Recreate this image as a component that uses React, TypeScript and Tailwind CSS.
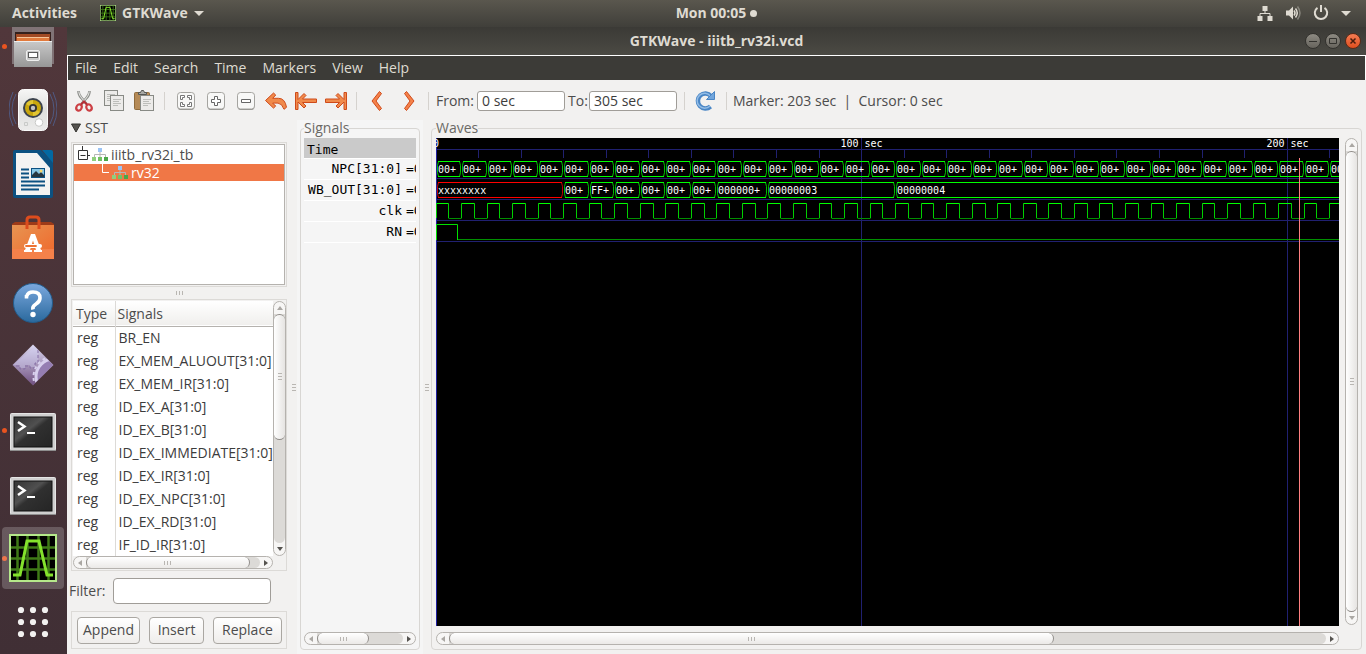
import React, { useEffect, useRef, useState } from "react";

const PX_PER_SEC = 4.256;
const END = 305;
const at = (t: number) => Math.floor(t * PX_PER_SEC) + 0.5;

type Seg = { from: number; to: number; label: string; undef?: boolean };

const npc: Seg[] = Array.from({ length: 51 }, (_, i) => ({ from: i * 6, to: Math.min((i + 1) * 6, END), label: "00+" }));
const wbOut: Seg[] = [
  { from: 0, to: 30, label: "xxxxxxxx", undef: true },
  { from: 30, to: 36, label: "00+" },
  { from: 36, to: 42, label: "FF+" },
  { from: 42, to: 48, label: "00+" },
  { from: 48, to: 54, label: "00+" },
  { from: 54, to: 60, label: "00+" },
  { from: 60, to: 66, label: "00+" },
  { from: 66, to: 78, label: "000000+" },
  { from: 78, to: 108, label: "00000003" },
  { from: 108, to: END, label: "00000004" },
];

function Bus({ segs, top, until }: { segs: Seg[]; top: number; until: number }) {
  const t = top + 0.5;
  const b = top + 15.5;
  return (
    <g>
      {segs.filter((s) => s.from < until).map((s) => {
        const x1 = at(s.from);
        const x2 = at(s.to);
        const c = s.undef ? "#ff0000" : "#00ff00";
        return (
          <g key={s.from} fill="none" stroke={c}>
            <path d={`M${x1 + 1.5} ${t}H${x2 - 1.5}M${x1 + 1.5} ${b}H${x2 - 1.5}`} />
            <path
              d={`M${x1 + 2} ${t}L${x1 + 1} ${t + 4}V${b - 4}L${x1 + 2} ${b}M${x2 - 2} ${t}L${x2 - 1} ${t + 4}V${b - 4}L${x2 - 2} ${b}`}
              opacity=".75"
            />
            <text x={x1 + 1.5} y={top + 12} fill="#fff" stroke="none">
              {s.label}
            </text>
          </g>
        );
      })}
    </g>
  );
}

function WaveCanvas() {
  const ref = useRef<SVGSVGElement>(null);
  const [width, setWidth] = useState(903);
  useEffect(() => {
    const el = ref.current;
    if (!el) return;
    const observer = new ResizeObserver(([entry]) => setWidth(entry.contentRect.width));
    observer.observe(el);
    return () => observer.disconnect();
  }, []);
  const until = Math.min(END, width / PX_PER_SEC);
  const ticks = Array.from({ length: 31 }, (_, i) => i * 10);
  const cycles = Array.from({ length: 51 }, (_, i) => i * 6);
  const majors = [100, 200, 300].filter((t) => t < until);
  return (
    <svg ref={ref} className="block h-full w-full" fontFamily="'DejaVu Sans Mono', monospace" fontSize="10" role="img" aria-label="Waves">
      <rect width="100%" height="100%" fill="#000" />
      <g stroke="#202070">
        {[11.5, 40.5, 61.5, 82.5, 103.5].map((y) => (
          <line key={y} x1="0" x2="100%" y1={y} y2={y} />
        ))}
        {ticks.map((t) => (
          <line key={t} x1={at(t)} x2={at(t)} y1="11" y2="20" />
        ))}
        {majors.map((t) => (
          <line key={t} x1={at(t)} x2={at(t)} y1="0" y2="100%" />
        ))}
      </g>
      <line x1=".5" x2=".5" y1="0" y2="100%" stroke="#2020a0" />
      <g fill="#fff">
        <text x="-3" y="9">0</text>
        {majors.map((t) => (
          <text key={t} x={at(t)} y="9" textAnchor="middle">
            {t} sec
          </text>
        ))}
      </g>
      <Bus segs={npc} top={23} until={until} />
      <Bus segs={wbOut} top={44} until={until} />
      {cycles.map((t) => (
        <g key={t} fill="none">
          <path d={`M${at(t + 3)} 80.5H${at(t + 6)}`} stroke="#009000" />
          <path d={`M${at(t)} 80V65.5M${at(t + 3)} 65.5V80`} stroke="#00d000" />
          <path d={`M${at(t)} 65.5H${at(t + 3)}`} stroke="#00ff00" />
        </g>
      ))}
      <path d={`M${at(5)} 101.5H${at(END)}`} stroke="#009000" />
      <path d={`M.5 102V86.5H${at(5)}V102`} fill="none" stroke="#00e000" />
      <line x1={at(203)} x2={at(203)} y1="20" y2="100%" stroke="#ff8080" />
    </svg>
  );
}

function Grip({ vertical }: { vertical?: boolean }) {
  return (
    <span className={vertical ? "flex flex-col gap-[2px]" : "flex gap-[2px]"}>
      {[0, 1, 2].map((i) => (
        <span key={i} className={vertical ? "h-px w-1 bg-[#b9b6b2]" : "h-1 w-px bg-[#b9b6b2]"} />
      ))}
    </span>
  );
}

function Arrow({ dir, dim }: { dir: "left" | "right" | "up" | "down"; dim?: boolean }) {
  const d = { left: "M6 1v6L2 4z", right: "M2 1v6l4-3z", up: "M1 6h6L4 2z", down: "M1 2h6L4 6z" }[dir];
  return (
    <svg className="size-2" viewBox="0 0 8 8" aria-hidden="true">
      <path d={d} fill={dim ? "#aaa7a3" : "#55534f"} />
    </svg>
  );
}

function Scroll({ vertical, size, label, dimEnd }: { vertical?: boolean; size: number; label: string; dimEnd?: boolean }) {
  const btn = "flex size-3 shrink-0 items-center justify-center";
  return (
    <div
      role="group"
      aria-label={label}
      className={
        vertical
          ? "flex w-[13px] shrink-0 flex-col rounded-full border border-[#b5b2ae] bg-[#f7f6f5]"
          : "flex h-[13px] shrink-0 items-center rounded-full border border-[#b5b2ae] bg-[#f7f6f5]"
      }
    >
      <button type="button" aria-label="Scroll back" className={btn}>
        <Arrow dir={vertical ? "up" : "left"} dim />
      </button>
      <div className={vertical ? "min-h-0 w-full flex-1 rounded-b-full bg-[#dcdad7]" : "h-full min-w-0 flex-1 rounded-r-full bg-[#dcdad7]"}>
        <div
          className={
            vertical
              ? "flex w-full items-center justify-center rounded-full border-y border-[#8f8c88] bg-linear-to-r from-white to-[#e6e4e2]"
              : "flex h-full items-center justify-center rounded-full border-x border-[#8f8c88] bg-linear-to-b from-white to-[#ebe9e7]"
          }
          style={vertical ? { height: `${size}%` } : { width: `${size}%` }}
        >
          <Grip vertical={vertical} />
        </div>
      </div>
      <button type="button" aria-label="Scroll forward" className={btn}>
        <Arrow dir={vertical ? "down" : "right"} dim={dimEnd} />
      </button>
    </div>
  );
}

function GtkWaveIcon({ className }: { className: string }) {
  return (
    <svg className={className} viewBox="0 0 48 48" aria-hidden="true">
      <rect width="48" height="48" fill="#b5e88b" />
      <rect x="2" y="2" width="44" height="44" fill="#000" />
      <path d="M8.500 2v44M18.500 2v44M29.500 2v44M39.500 2v44M2 13.500h44M2 24.500h44M2 35.500h44" stroke="#3f7a17" strokeWidth="2.500" />
      <path d="M4 41h7L18 7h12l8 34h6" fill="none" stroke="#84e22c" strokeWidth="3" />
    </svg>
  );
}

function FilesIcon() {
  return (
    <svg className="size-12" viewBox="0 0 48 48" aria-hidden="true">
      <defs>
        <linearGradient id="cab" x2="0" y2="1"><stop stopColor="#c9c9c9" /><stop offset="1" stopColor="#979797" /></linearGradient>
      </defs>
      <path d="M3 0h42v42H3z" fill="#807376" />
      <rect x="6" y="10" width="36" height="12" fill="#35201c" />
      <path d="M7 12h34v9H7z" fill="#a24a24" /><path d="M8 16h32v4H8z" fill="#e27a3c" /><path d="M8 15.500h32" stroke="#f5c59b" />
      <path d="M5 19h38v26H5z" fill="url(#cab)" /><path d="M5 19.500h38" stroke="#ededed" />
      <rect x="17.500" y="28.500" width="13" height="10" rx="1.500" fill="#c9c9c9" stroke="#efefef" />
      <rect x="19.500" y="30.500" width="9" height="5" fill="#fff" stroke="#5c5c5c" />
    </svg>
  );
}

function SpeakerIcon() {
  return (
    <svg className="size-12" viewBox="0 0 48 48" aria-hidden="true">
      <defs>
        <linearGradient id="spk" x2="0" y2="1"><stop stopColor="#f6f6f5" /><stop offset=".5" stopColor="#dedfdd" /><stop offset="1" stopColor="#ececeb" /></linearGradient>
      </defs>
      <g fill="none" stroke="#505a82">
        <path d="M7 8q-8 15 0 30M4 6q-8 17 0 34M41 8q8 15 0 30M44 6q8 17 0 34" />
      </g>
      <rect x="9.500" y="3.500" width="29" height="41" rx="5" fill="url(#spk)" stroke="#fafafa" />
      <circle cx="24" cy="22" r="10" fill="#3c434d" />
      <circle cx="24" cy="22" r="8" fill="#c9a70d" />
      <path d="M17 18a8 8 0 0 1 7-4v16a8 8 0 0 0 7-4z" fill="#f2d94b" opacity=".6" />
      <circle cx="24" cy="22" r="4" fill="#333" /><circle cx="24" cy="22" r="2.200" fill="#c4c4c4" />
      <circle cx="30" cy="36.500" r="3.800" fill="#fff" stroke="#c9cac8" />
      <path d="M15.500 36.500h3v3h-3z" fill="none" stroke="#c8cac8" />
    </svg>
  );
}

function WriterIcon() {
  return (
    <svg className="size-12" viewBox="0 0 48 48" aria-hidden="true">
      <path d="M6 0h26l12 12v34q0 2-2 2H6q-2 0-2-2V2q0-2 2-2z" fill="#0c5181" />
      <path d="M33 0h9q2 0 2 2v11z" fill="#0369a3" />
      <path d="M7 3h21l13 15v27H7z" fill="#f3f3f2" />
      <path d="M12 19.500h8M12 23.500h8M12 27.500h8M12 31.500h24M12 35.500h24M12 39.500h18" stroke="#0c5181" strokeWidth="2" />
      <rect x="22.500" y="18.500" width="13" height="9" fill="#87c6e5" stroke="#0c5181" />
      <path d="M23 27v-2l4-4 3 3 2-2 3 3v2z" fill="#263640" /><circle cx="32" cy="21" r="1.500" fill="#f9d76a" />
    </svg>
  );
}

function SoftwareIcon() {
  return (
    <svg className="size-12" viewBox="0 0 48 48" aria-hidden="true">
      <defs>
        <linearGradient id="bag" x2="1" y2="1"><stop stopColor="#e79452" /><stop offset="1" stopColor="#f0672a" /></linearGradient>
      </defs>
      <path d="M3 10l3-2h36l3 2v6H3z" fill="#9d3a18" />
      <path d="M3 11h42v34H3z" fill="url(#bag)" /><path d="M3 35h42v10H3z" fill="#f4814a" />
      <path d="M18 15V6q0-3 3-3h6q3 0 3 3v9" fill="none" stroke="#dd4c1d" strokeWidth="3" />
      <path d="M22 20h4l6 16h1v2h-8v-2h2l-3-9.500L21 36h2v2h-8v-2h1z" fill="#fff" />
      <rect x="15" y="30" width="18" height="4" rx="2" fill="#fff" />
      <path d="M17 32h10" stroke="#ee7334" strokeWidth="1.800" strokeLinecap="round" />
    </svg>
  );
}

function HelpIcon() {
  return (
    <svg className="size-12" viewBox="0 0 48 48" aria-hidden="true">
      <defs>
        <linearGradient id="hlp" x2="0" y2="1"><stop stopColor="#7ba8de" /><stop offset="1" stopColor="#2a699d" /></linearGradient>
      </defs>
      <circle cx="24" cy="25" r="19.500" fill="url(#hlp)" stroke="#225c8c" />
      <path d="M17.500 17v3.500M17.800 18q1.200-4 6.200-4 7 0 7 6 0 3.500-4 6t-3 5.500" fill="none" stroke="#fff" strokeWidth="3.600" />
      <circle cx="24" cy="36.500" r="2.700" fill="#fff" />
    </svg>
  );
}

function DiamondIcon() {
  return (
    <svg className="size-12" viewBox="0 0 48 48" aria-hidden="true">
      <defs>
        <linearGradient id="dia" x2="0" y2="1"><stop stopColor="#dcd9f2" /><stop offset="1" stopColor="#705080" /></linearGradient>
        <clipPath id="diac"><path d="M24 3l20 20-20 20L4 23z" /></clipPath>
      </defs>
      <path d="M24 2.500L44.500 23 24 43.500 3.500 23z" fill="url(#dia)" />
      <g clipPath="url(#diac)">
        <path d="M29 3v18h-3v4h-5v-2h-5v3h-5v-3H3z" fill="#cfcdf0" opacity=".4" />
        <path d="M29 3v18h-3v5h-5v-2h-5v3h-5v-3H3" fill="none" stroke="#846ea5" strokeDasharray="3 2" />
        <circle cx="45" cy="35" r="19" fill="#957eb2" /><circle cx="45" cy="35" r="18" fill="none" stroke="#d8d0ed" strokeWidth="3" />
        <circle cx="45" cy="35" r="20.500" fill="none" stroke="#d8d0ed" strokeWidth="2" strokeDasharray="3 3" />
      </g>
    </svg>
  );
}

function TerminalIcon() {
  return (
    <svg className="size-12" viewBox="0 0 48 48" aria-hidden="true">
      <defs>
        <linearGradient id="trm" x2="1" y2="1"><stop offset=".1" stopColor="#3a3a3a" /><stop offset=".4" stopColor="#505050" /><stop offset=".5" stopColor="#303030" /><stop offset="1" stopColor="#252525" /></linearGradient>
      </defs>
      <rect x="1.500" y="7.500" width="45" height="37" rx="1" fill="#cfcfcf" stroke="#e5e5e5" />
      <path d="M1 44.500h46" stroke="#8e8e8e" />
      <rect x="5" y="11" width="38" height="30" fill="url(#trm)" stroke="#111" />
      <path d="M9 16l6.500 4.500L9 25" fill="none" stroke="#fff" strokeWidth="2.500" /><path d="M18 27h8" stroke="#fff" strokeWidth="2" />
    </svg>
  );
}

function AppsIcon() {
  return (
    <svg className="size-12" viewBox="0 0 48 48" aria-hidden="true" fill="#f2f1f0">
      {[12, 24, 36].map((y) => [12, 24, 36].map((x) => <circle key={`${x}-${y}`} cx={x} cy={y} r="3.100" />))}
    </svg>
  );
}

const dock = [
  { name: "Files", icon: <FilesIcon />, running: true },
  { name: "Rhythmbox", icon: <SpeakerIcon /> },
  { name: "LibreOffice Writer", icon: <WriterIcon /> },
  { name: "Ubuntu Software", icon: <SoftwareIcon /> },
  { name: "Help", icon: <HelpIcon /> },
  { name: "Settings", icon: <DiamondIcon /> },
  { name: "Terminal", icon: <TerminalIcon />, running: true },
  { name: "Terminal 2", icon: <TerminalIcon /> },
  { name: "GTKWave", icon: <GtkWaveIcon className="size-12" />, running: true, active: true },
  { name: "Show Applications", icon: <AppsIcon /> },
];

function Dock() {
  return (
    <nav aria-label="Dock" className="flex w-[67px] shrink-0 flex-col justify-end overflow-hidden bg-linear-to-b from-[#51373b] to-[#402f35]">
      {dock.map((d) => (
        <button key={d.name} type="button" aria-label={d.name} className="flex h-16 w-full shrink-0 items-center pl-[2px]">
          <span className={d.running ? "size-[5px] shrink-0 rounded-full bg-[#e95420]" : "size-[5px] shrink-0"} />
          <span className={d.active ? "-ml-[5px] flex h-[62px] w-[62px] items-center justify-center rounded bg-white/20" : "-ml-[5px] flex h-[62px] w-[62px] items-center justify-center"}>
            {d.icon}
          </span>
        </button>
      ))}
    </nav>
  );
}

function TopBar() {
  return (
    <header className="grid h-[27px] shrink-0 grid-cols-[1fr_auto_1fr] items-center bg-linear-to-b from-[#5a574e] to-[#403f3a] pb-px text-[14px] font-bold text-[#dfdbd2]">
      <div className="flex items-center pl-3">
        <button type="button" className="w-[88px] text-left">Activities</button>
        <button type="button" className="flex items-center gap-[6px]">
          <GtkWaveIcon className="size-4" />
          GTKWave
          <svg className="h-[5px] w-[10px]" viewBox="0 0 10 5" aria-hidden="true"><path d="M0 0h10L5 5z" fill="currentColor" /></svg>
        </button>
      </div>
      <button type="button" className="flex items-center gap-1 pl-[67px]">
        Mon 00:05
        <span className="size-[7px] rounded-full bg-[#dfdbd2]" />
      </button>
      <div className="flex items-center justify-end gap-3 pr-[15px]">
        <svg className="size-4" viewBox="0 0 16 16" aria-hidden="true">
          <path d="M5.500 1h5v5h-5zM.5 11h5v5h-5zM10.500 11h5v5h-5z" fill="currentColor" />
          <path d="M8 6v2.500M3 11V8.500h10V11" fill="none" stroke="currentColor" />
        </svg>
        <svg className="size-4" viewBox="0 0 16 16" aria-hidden="true">
          <path d="M1 5.500h3l4-4v13l-4-4H1z" fill="currentColor" />
          <path d="M9 5.500q2 2.500 0 5M10.500 3.500q3.500 4.500 0 9" fill="none" stroke="currentColor" strokeWidth="1.500" />
          <path d="M12.500 1.500q5 6.500 0 13" fill="none" stroke="currentColor" strokeWidth="1.500" opacity=".4" />
        </svg>
        <svg className="size-4" viewBox="0 0 16 16" aria-hidden="true">
          <path d="M4.500 2.800a6.200 6.200 0 1 0 7 0M8 0v7" fill="none" stroke="currentColor" strokeWidth="2" />
        </svg>
        <svg className="h-[5px] w-[10px]" viewBox="0 0 10 5" aria-hidden="true"><path d="M0 0h10L5 5z" fill="currentColor" /></svg>
      </div>
    </header>
  );
}

function TitleBar() {
  const round = "flex size-4 items-center justify-center rounded-full border border-[#33322e] bg-linear-to-b from-[#8d8a82] to-[#67645d]";
  return (
    <div className="grid h-7 shrink-0 grid-cols-[1fr_auto_1fr] items-center bg-linear-to-b from-[#3b3a36] to-[#4b4a44]">
      <h1 className="col-start-2 text-[14px] font-bold text-[#dfdbd2]">GTKWave - iiitb_rv32i.vcd</h1>
      <div className="flex justify-end gap-1 pr-[5px]">
        <button type="button" aria-label="Minimize" className={round}>
          <svg className="size-[14px]" viewBox="0 0 14 14"><path d="M3 7.500h8" stroke="#33322e" /></svg>
        </button>
        <button type="button" aria-label="Maximize" className={round}>
          <svg className="size-[14px]" viewBox="0 0 14 14"><path d="M3.500 4.500h7v5h-7z" fill="none" stroke="#33322e" /></svg>
        </button>
        <button type="button" aria-label="Close" className="flex size-4 items-center justify-center rounded-full border border-[#5a2a18] bg-linear-to-b from-[#f57c52] to-[#df4e1c]">
          <svg className="size-[14px]" viewBox="0 0 14 14"><path d="M4.500 4.500l5 5m0-5l-5 5" stroke="#4a1c0c" strokeWidth="1.500" /></svg>
        </button>
      </div>
    </div>
  );
}

function Tool({ label, children }: { label: string; children: React.ReactNode }) {
  return (
    <button type="button" aria-label={label} title={label} className="flex w-[30px] shrink-0 items-center justify-center">
      <svg className="size-6" viewBox="0 0 24 24" fill="none" aria-hidden="true">
        {children}
      </svg>
    </button>
  );
}

const Sep = ({ className }: { className: string }) => <span className={`h-[18px] w-px shrink-0 bg-[#d5d2ce] ${className}`} />;

function Sheet({ x, y }: { x: number; y: number }) {
  return (
    <g>
      <rect x={x + 0.5} y={y + 0.5} width="13" height="15" fill="#ecebe9" stroke="#888a85" />
      <path d={`M${x + 3} ${y + 4.5}h8M${x + 3} ${y + 6.5}h6M${x + 3} ${y + 8.5}h8M${x + 3} ${y + 10.5}h5`} stroke="#bdbeba" />
    </g>
  );
}

const Pad = () => (
  <>
    <rect x="3.500" y="4" width="17" height="17" rx="3.500" fill="#8d8c88" />
    <rect x="3.500" y="3.500" width="17" height="16.500" rx="3" fill="#f8f8f7" stroke="#a5a4a0" />
  </>
);

function Toolbar() {
  const box = "h-5 w-[88px] rounded-[3px] border border-[#a09d98] bg-white px-1 text-[14px] text-[#3c3c3c] outline-none";
  return (
    <div role="toolbar" className="flex h-10 shrink-0 items-center pl-[2px] pt-px">
      <Tool label="Cut">
        <path d="M6.500 2q0 4 3 7l5 6M17.500 2q0 4-3 7l-5 6" stroke="#8b8d89" strokeWidth="2.600" />
        <path d="M6.700 2.500q.3 3.500 3 6.500l4 5M17.300 2.500q-.3 3.500-3 6.500l-4 5" stroke="#e3e3e0" strokeWidth="1.100" />
        <ellipse cx="7" cy="18.500" rx="2.600" ry="3.200" stroke="#cc3f44" strokeWidth="2.200" transform="rotate(25 7 18.500)" />
        <ellipse cx="17" cy="18.500" rx="2.600" ry="3.200" stroke="#cc3f44" strokeWidth="2.200" transform="rotate(-25 17 18.500)" />
        <path d="M9 15.500l3-3 3 3" stroke="#b52f36" strokeWidth="2" />
      </Tool>
      <Tool label="Copy"><Sheet x={2} y={1} /><Sheet x={8} y={6} /></Tool>
      <Tool label="Paste">
        <rect x="2.500" y="3.500" width="15" height="17" rx="1" fill="#b58a56" stroke="#8f6b3c" />
        <path d="M6.500 5.500v-2h2l1-2h2l1 2h2v2z" fill="#a7a8a4" stroke="#555753" />
        <Sheet x={8} y={6} />
      </Tool>
      <Sep className="ml-[5px] mr-[6px]" />
      <Tool label="Zoom fit">
        <Pad />
        <path d="M6.500 10.500v-4h4v2h-2v2zM17.500 10.500v-4h-4v2h2v2zM6.500 13.500v4h4v-2h-2v-2zM17.500 13.500v4h-4v-2h2v-2z" fill="#fff" stroke="#777" />
      </Tool>
      <Tool label="Zoom in"><Pad /><path d="M10.500 7.500h3v3h3v3h-3v3h-3v-3h-3v-3h3z" fill="#fff" stroke="#666" /></Tool>
      <Tool label="Zoom out"><Pad /><path d="M7.500 10.500h9v3h-9z" fill="#fff" stroke="#666" /></Tool>
      <Tool label="Undo zoom">
        <path d="M1.500 11.500L9.500 4l2.200 2-3 3.300h5.800q6.500 0 8 9l-2.500 2q-2-6-6-6.200H8.700l3 3-2.200 2z" fill="#f08a4b" stroke="#cf4a1a" strokeLinejoin="round" />
      </Tool>
      <Tool label="Go to start">
        <path d="M1.500 3.500h2.500v7L10 4.500l2 2-3.500 3.500H22.500v3.500H8.500L12 17l-2 2-6-6v7.500H1.500z" fill="#f08a4b" stroke="#cf4a1a" strokeLinejoin="round" />
      </Tool>
      <Tool label="Go to end">
        <path d="M22.500 3.500H20v7L14 4.500l-2 2 3.500 3.500H1.500v3.500h14L12 17l2 2 6-6v7.500h2.500z" fill="#f08a4b" stroke="#cf4a1a" strokeLinejoin="round" />
      </Tool>
      <Sep className="mx-[5px]" />
      <Tool label="Previous edge"><path d="M14.500 2.500l2 2-5.500 7.500 5.500 7.500-2 2L7 12z" fill="#f5824a" stroke="#cf4a1a" strokeLinejoin="round" /></Tool>
      <span className="w-[2px]" />
      <Tool label="Next edge"><path d="M9.500 2.500l-2 2L13 12l-5.500 7.500 2 2L17 12z" fill="#f5824a" stroke="#cf4a1a" strokeLinejoin="round" /></Tool>
      <Sep className="ml-1 mr-[7px]" />
      <label htmlFor="from" className="w-[41px] shrink-0">From:</label>
      <input id="from" defaultValue="0 sec" className={box} />
      <label htmlFor="to" className="ml-[3px] w-[21px] shrink-0">To:</label>
      <input id="to" defaultValue="305 sec" className={box} />
      <Sep className="ml-[7px] mr-[5px]" />
      <Tool label="Reload">
        <path d="M17.500 17.500a7.500 7.500 0 1 1 .5-10.500" stroke="#4a86c5" strokeWidth="4.500" />
        <path d="M17 17a7.500 7.500 0 1 1 .5-10" stroke="#92bce6" strokeWidth="1.500" />
        <path d="M21.500 2.500v8h-8z" fill="#72a6dc" stroke="#4a86c5" strokeLinejoin="round" />
      </Tool>
      <Sep className="mx-[6px]" />
      <span className="whitespace-nowrap">Marker: 203 sec&nbsp; | &nbsp;Cursor: 0 sec</span>
    </div>
  );
}

function Hierarchy() {
  return (
    <svg className="h-[14px] w-4 shrink-0" viewBox="0 0 16 14" aria-hidden="true">
      <path d="M2.500 9V6.500h11V9M8 4v5" fill="none" stroke="#b6b6b6" />
      <rect x="6" y="0" width="4" height="4" fill="#9cc4f5" />
      <rect x="0" y="9" width="4" height="4" fill="#8fcf7d" /><rect x="6" y="9" width="4" height="4" fill="#74c264" /><rect x="12" y="9" width="4" height="4" fill="#4aa84a" />
    </svg>
  );
}

const signals = [
  "BR_EN", "EX_MEM_ALUOUT[31:0]", "EX_MEM_IR[31:0]", "ID_EX_A[31:0]", "ID_EX_B[31:0]", "ID_EX_IMMEDIATE[31:0]",
  "ID_EX_IR[31:0]", "ID_EX_NPC[31:0]", "ID_EX_RD[31:0]", "IF_ID_IR[31:0]",
];

function SstPane() {
  const btn = "h-[27px] rounded border border-[#aaa7a2] bg-linear-to-b from-white to-[#efedeb]";
  return (
    <section className="flex w-[222px] shrink-0 flex-col pb-[5px]">
      <button type="button" className="flex h-4 items-center gap-1 pl-[3px] text-left leading-4">
        <svg className="size-[10px]" viewBox="0 0 10 10" aria-hidden="true"><path d="M.5 1h9L5 9z" fill="#55534f" stroke="#33322e" /></svg>
        SST
      </button>
      <div className="ml-[3px] mr-[3px] mt-[6px] h-[145px] shrink-0 border border-[#dcdad7] p-px">
        <div role="tree" aria-label="Design hierarchy" className="h-full border border-[#b5b2ae] bg-white pt-px">
          <div role="treeitem" aria-expanded="true" className="flex h-[18px] items-center gap-[2px] pl-1 text-[14px] leading-[18px]">
            <svg className="h-[18px] w-3 shrink-0" viewBox="0 0 12 18" aria-hidden="true">
              <path d="M.5 4.500h9v9h-9zM2.500 9.500h5M4.500 0v4M9 9.500h3" fill="none" stroke="#333" />
            </svg>
            <Hierarchy />
            <span className="pl-px">iiitb_rv32i_tb</span>
          </div>
          <div role="treeitem" aria-selected="true" className="flex h-[17px] items-center gap-[2px] bg-[#f07746] pl-7 text-[14px] leading-[17px] text-white">
            <svg className="h-[17px] w-2 shrink-0" viewBox="0 0 8 17" aria-hidden="true"><path d="M.5 0v8.500H7" fill="none" stroke="#fff" /></svg>
            <Hierarchy />
            <span className="pl-px">rv32</span>
          </div>
        </div>
      </div>
      <div className="flex h-3 shrink-0 items-center justify-center"><Grip /></div>
      <div className="ml-[3px] mr-[3px] flex h-[272px] shrink-0 border border-[#dcdad7] py-px pl-px">
        <div className="flex min-w-0 flex-1 flex-col">
          <div className="min-h-0 flex-1 overflow-hidden bg-white">
            <table className="w-full table-fixed border-collapse text-left whitespace-nowrap">
              <thead>
                <tr className="h-[25px] border-b border-[#b5b2ae] bg-linear-to-b from-white to-[#f0efed]">
                  <th className="w-[42px] border-r border-[#dcdad7] pl-[3px] pt-[2px] font-normal">Type</th>
                  <th className="pl-[2px] pt-[2px] font-normal">Signals</th>
                </tr>
              </thead>
              <tbody className="text-[#3c3c3c]">
                {signals.map((s) => (
                  <tr key={s} className="h-[23px]">
                    <td className="border-r border-[#dcdad7] pl-1">reg</td>
                    <td className="overflow-hidden pl-[3px]">{s}</td>
                  </tr>
                ))}
              </tbody>
            </table>
          </div>
          <Scroll size={94} label="Signals horizontal" />
        </div>
        <div className="mb-[13px] flex">
          <Scroll vertical size={55} label="Signals vertical" />
        </div>
      </div>
      <div className="flex h-10 shrink-0 items-center pl-px">
        <label htmlFor="filter" className="w-11 shrink-0">Filter:</label>
        <input id="filter" className="h-[26px] w-[158px] rounded-[4px] border border-[#a09d98] bg-white px-1 outline-none" />
      </div>
      <div className="ml-[3px] mr-[3px] flex h-[38px] shrink-0 items-center justify-between border border-[#dcdad7] pl-[5px] pr-1">
        <button type="button" className={`${btn} w-[63px]`}>Append</button>
        <button type="button" className={`${btn} w-[55px]`}>Insert</button>
        <button type="button" className={`${btn} w-[69px]`}>Replace</button>
      </div>
    </section>
  );
}

function SignalsPane() {
  const row = "flex h-[21px] items-center justify-end border-b border-white";
  return (
    <section className="flex w-[126px] shrink-0 bg-[#f5f5f5] px-[3px] pb-1">
      <fieldset className="flex min-w-0 flex-1 flex-col rounded-[4px] border border-[#d8d6d3] px-[3px] pb-1 pt-[2px]">
        <legend className="h-4 leading-4 text-[#6b6965]">Signals</legend>
        <div className="flex h-full flex-col">
          <div className="min-h-0 flex-1 overflow-hidden font-['DejaVu_Sans_Mono',monospace] text-[13px] leading-5 text-black">
            <div className="h-[21px] border-b border-white bg-[#cacaca] pl-[3px] pt-[2px]">Time</div>
            {["NPC[31:0]", "WB_OUT[31:0]", "clk", "RN"].map((n) => (
              <div key={n} className={row}>
                <span>{n}</span>
                <span className="ml-1 w-[10px] shrink-0 overflow-hidden">=0</span>
              </div>
            ))}
          </div>
          <Scroll size={61} label="Names horizontal" />
        </div>
      </fieldset>
    </section>
  );
}

function WavesPane() {
  return (
    <section className="flex min-w-0 flex-1 pb-1 pl-[1px] pr-1">
      <fieldset className="min-w-0 flex-1 rounded-[4px] border border-[#d8d6d3] pb-1 pl-1 pr-[3px] pt-[2px]">
        <legend className="h-4 leading-4 text-[#6b6965]">Waves</legend>
        <div className="flex h-full w-full gap-[6px]">
          <div className="flex min-w-0 flex-1 flex-col gap-[6px]">
            <div className="min-h-0 flex-1 overflow-hidden bg-black"><WaveCanvas /></div>
            <Scroll size={69} label="Time horizontal" />
          </div>
          <div className="mb-5 flex">
            <Scroll vertical size={100} label="Waves vertical" dimEnd />
          </div>
        </div>
      </fieldset>
    </section>
  );
}

const Split = () => <div role="separator" className="flex w-[7px] shrink-0 items-center justify-center"><Grip vertical /></div>;

export default function App() {
  return (
    <div className="flex h-screen flex-col overflow-hidden bg-[#f2f1f0] font-['Open_Sans','Noto_Sans',sans-serif] text-[14px] leading-5 text-[#4c4c4c]">
      <TopBar />
      <div className="flex min-h-0 flex-1">
        <Dock />
        <main className="flex min-w-0 flex-1 flex-col">
          <TitleBar />
          <nav aria-label="Menu" className="flex h-[25px] shrink-0 items-center gap-4 border-l border-r border-t border-white bg-[#3c3b37] pl-[7px] text-[#dfdbd2]">
            {["File", "Edit", "Search", "Time", "Markers", "View", "Help"].map((m) => (
              <button key={m} type="button">{m}</button>
            ))}
          </nav>
          <Toolbar />
          <div className="flex min-h-0 flex-1 pl-px">
            <SstPane />
            <Split />
            <SignalsPane />
            <Split />
            <WavesPane />
          </div>
        </main>
      </div>
    </div>
  );
}
